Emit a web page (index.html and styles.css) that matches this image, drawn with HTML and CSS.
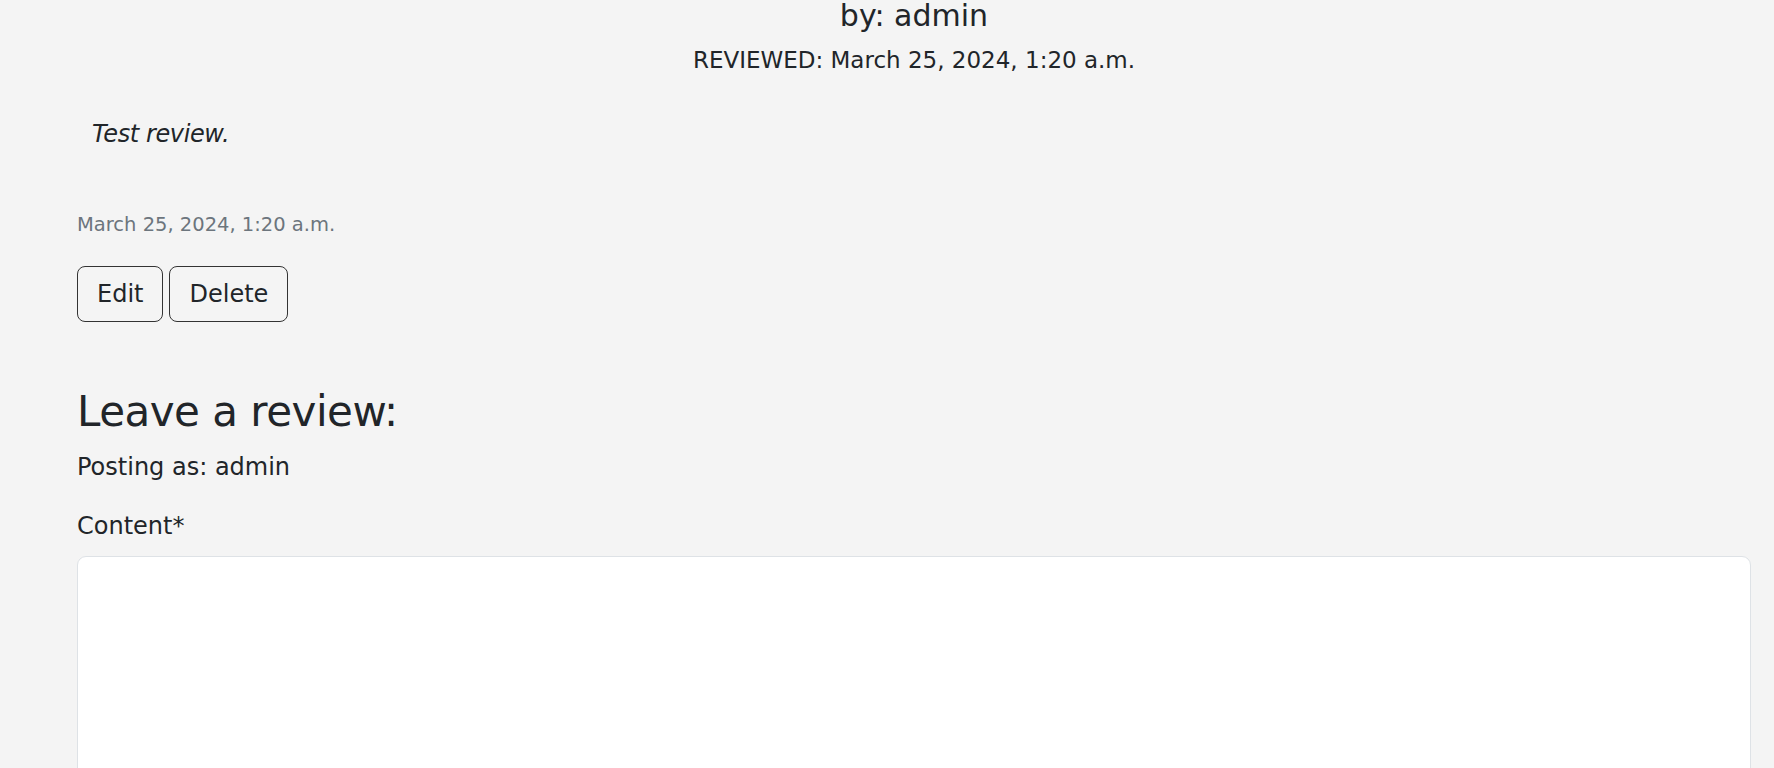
FILE: index.html
```html
<!DOCTYPE html>
<html lang="en">
<head>
<meta charset="utf-8">
<title>Review</title>
<link rel="stylesheet" href="styles.css">
</head>
<body>
<main class="page">
  <section class="review">
    <h4 class="review-author">by: admin</h4>
    <p class="review-stamp">REVIEWED: March 25, 2024, 1:20 a.m.</p>
    <p class="review-body">Test review.</p>
    <p class="review-date">March 25, 2024, 1:20 a.m.</p>
    <div class="review-actions">
      <button class="btn" type="button">Edit</button>
      <button class="btn" type="button">Delete</button>
    </div>
  </section>
  <section class="leave">
    <h2 class="leave-title">Leave a review:</h2>
    <p class="leave-user">Posting as: admin</p>
    <form class="leave-form">
      <label class="field-label" for="content">Content*</label>
      <textarea class="field-input" id="content" name="content"></textarea>
    </form>
  </section>
</main>
</body>
</html>
```

FILE: styles.css
```css
html, body {
  margin: 0;
  padding: 0;
  background: #f4f4f4;
  overflow: hidden;
}

body {
  font-family: "DejaVu Sans", "Liberation Sans", sans-serif;
  color: #212529;
}

.page {
  padding: 0 23px 0 77px;
}

.review {
  display: flex;
  flex-direction: column;
}

.review-author {
  margin: 0;
  font-size: 30px;
  font-weight: 400;
  line-height: 32px;
  text-align: center;
}

.review-stamp {
  margin: 14px 0 0;
  font-size: 23px;
  line-height: 28px;
  text-align: center;
}

.review-body {
  margin: 42px 0 0;
  padding-left: 15px;
  font-size: 24px;
  line-height: 36px;
  font-style: italic;
  letter-spacing: -0.4px;
}

.review-date {
  margin: 58px 0 0;
  font-size: 19.5px;
  line-height: 29px;
  color: #6c757d;
}

.review-actions {
  display: flex;
  gap: 6px;
  margin-top: 27px;
}

.btn {
  font-family: inherit;
  font-size: 24px;
  line-height: 36px;
  color: #212529;
  background: transparent;
  border: 1px solid #333;
  border-radius: 8px;
  padding: 9px 19px;
  cursor: pointer;
}

.leave {
  margin-top: 65px;
}

.leave-title {
  margin: 0;
  font-size: 42px;
  font-weight: 400;
  line-height: 50px;
  letter-spacing: -0.5px;
}

.leave-user {
  margin: 12px 0 0;
  font-size: 24px;
  line-height: 36px;
}

.leave-form {
  display: flex;
  flex-direction: column;
  margin-top: 23px;
}

.field-label {
  font-size: 24px;
  line-height: 36px;
}

.field-input {
  margin-top: 12px;
  height: 320px;
  border: 1px solid #dee2e6;
  border-radius: 9px;
  background: #fff;
  resize: none;
  font-family: inherit;
  font-size: 24px;
  box-sizing: border-box;
}
```
